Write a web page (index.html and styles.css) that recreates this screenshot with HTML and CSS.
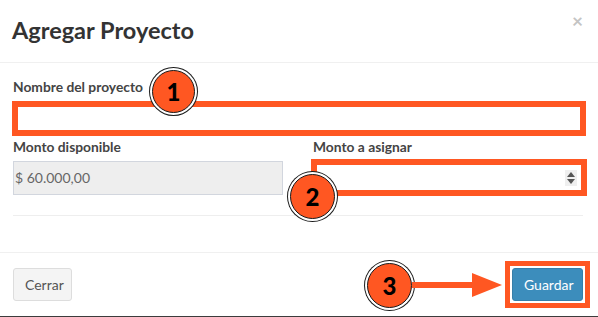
FILE: index.html
```html
<!DOCTYPE html>
<html lang="es">
<head>
<meta charset="utf-8">
<title>Agregar Proyecto</title>
<link rel="stylesheet" href="styles.css">
</head>
<body>
<div class="modal">
  <div class="modal-header">
    <h4 class="modal-title">Agregar Proyecto</h4>
    <span class="close">×</span>
  </div>
  <div class="modal-body">
    <div class="form-group first">
      <label class="label">Nombre del proyecto</label>
      <div class="field hl-1">
        <div class="input"></div>
      </div>
    </div>
    <div class="row">
      <div class="form-group">
        <label class="label">Monto disponible</label>
        <div class="field">
          <div class="input disabled">$ 60.000,00</div>
        </div>
      </div>
      <div class="form-group">
        <label class="label">Monto a asignar</label>
        <div class="field hl-2">
          <div class="input"></div>
          <span class="spinner"><span class="up"></span><span class="down"></span></span>
        </div>
      </div>
    </div>
    <div class="divider"></div>
  </div>
  <div class="modal-footer">
    <button class="btn btn-default">Cerrar</button>
    <div class="save-wrap">
      <button class="btn btn-primary">Guardar</button>
    </div>
  </div>

  <div class="badge badge-1">1</div>
  <div class="badge badge-2">2</div>
  <div class="badge badge-3">3</div>
  <svg class="arrow" width="92" height="26" viewBox="0 0 92 26">
    <rect x="0" y="10" width="62" height="6" fill="#ff5722"/>
    <polygon points="60,1 90,13 60,25" fill="#ff5722"/>
  </svg>
</div>
</body>
</html>
```
FILE: styles.css
```css
* { box-sizing: border-box; }
html, body { margin: 0; padding: 0; background: #fff; }
body {
  font-family: Lato, "Open Sans", "Liberation Sans", sans-serif;
  color: #333;
  width: 598px;
  height: 317px;
  overflow: hidden;
}
.modal {
  position: relative;
  width: 598px;
  height: 317px;
  border-bottom: 1px solid #3c3c3c;
}
.modal-header {
  height: 63px;
  border-bottom: 1px solid #f0f0f0;
  display: flex;
  justify-content: space-between;
  align-items: flex-start;
  padding: 0 15px 0 12px;
}
.modal-title {
  margin: 0;
  padding-top: 16px;
  font-size: 23.5px;
  line-height: 28px;
  font-weight: 700;
  color: #333;
}
.close {
  margin-top: 9px;
  font-size: 19px;
  font-weight: 700;
  color: #c4c4c4;
  line-height: 24px;
}
.modal-body {
  height: 189px;
  padding: 14px 15px 0 13px;
}
.form-group.first { margin-bottom: 2px; }
.label {
  display: block;
  font-size: 13.8px;
  line-height: 20px;
  font-weight: 700;
  color: #444;
  margin-bottom: 4px;
}
.field { position: relative; }
.input {
  height: 34px;
  border: 1px solid #d2d6de;
  background: #fff;
  font-size: 14px;
  line-height: 32px;
  padding: 0 1px;
  color: #666;
}
.input.disabled { background: #eeeeee; }
.row {
  display: grid;
  grid-template-columns: 270px 270px;
  column-gap: 30px;
}
.divider {
  margin-top: 20px;
  border-top: 1px solid #eeeeee;
}
.spinner {
  position: absolute;
  right: 6px;
  top: 9px;
  width: 12px;
  height: 16px;
  background: #efefef;
  display: flex;
  flex-direction: column;
  align-items: center;
  justify-content: center;
  gap: 2px;
}
.spinner .up {
  width: 0; height: 0;
  border-left: 4px solid transparent;
  border-right: 4px solid transparent;
  border-bottom: 5px solid #555;
}
.spinner .down {
  width: 0; height: 0;
  border-left: 4px solid transparent;
  border-right: 4px solid transparent;
  border-top: 5px solid #555;
}
.hl-1::after, .hl-2::after, .save-wrap::after {
  content: "";
  position: absolute;
  border: 6px solid #ff5722;
  pointer-events: none;
}
.hl-1::after { top: 0; left: -1px; right: -3px; bottom: -1px; }
.hl-2::after { top: -2px; left: -2px; right: -4px; bottom: -1px; }
.modal-footer {
  border-top: 1px solid #f0f0f0;
  padding: 15px 15px 0 13px;
  display: flex;
  justify-content: space-between;
  align-items: flex-start;
}
.btn {
  height: 33px;
  font-family: inherit;
  font-size: 14px;
  border-radius: 3px;
  padding: 0 11px;
  cursor: pointer;
}
.btn-default {
  background: #f4f4f4;
  border: 1px solid #dddddd;
  color: #555;
  width: 59px;
}
.btn-primary {
  background: #3c8dbc;
  border: 1px solid #367fa9;
  color: #fff;
  width: 71px;
}
.save-wrap { position: relative; display: flex; }
.save-wrap::after { top: -7px; left: -7px; right: -7px; bottom: -7px; border-width: 5px; }
.badge {
  position: absolute;
  width: 45px;
  height: 45px;
  border-radius: 50%;
  background: #ff5722;
  border: 1px solid #1a1a1a;
  box-shadow: 0 0 0 2px #fff, 0 0 0 3px #1a1a1a;
  color: #000;
  font-family: Lato, "Liberation Sans", sans-serif;
  font-weight: 900;
  font-size: 24px;
  display: flex;
  align-items: center;
  justify-content: center;
  line-height: 1;
}
.badge-1 { left: 152px; top: 70px; width: 43px; height: 43px; }
.badge-2 { left: 290px; top: 174px; }
.badge-3 { left: 367px; top: 263px; }
.arrow { position: absolute; left: 412px; top: 272px; }
```
